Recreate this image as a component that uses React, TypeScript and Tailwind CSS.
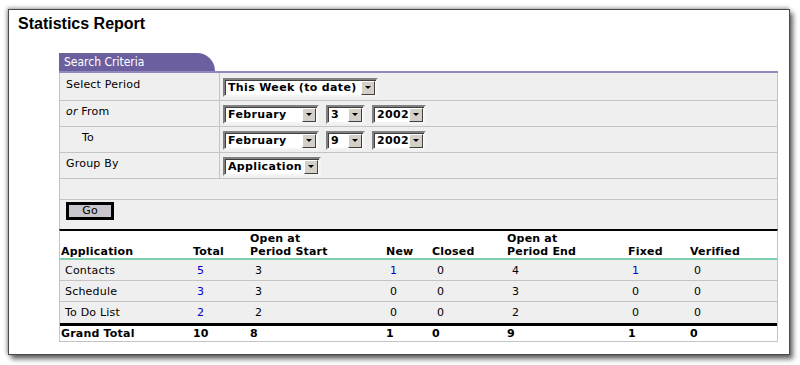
import React from "react";

function Select({ value, w }: { value: string; w: string }) {
  return (
    <div
      className={`${w} h-[19px] flex items-center bg-white border-2 border-t-[#808080] border-l-[#808080] border-r-[#f4f4f4] border-b-[#f4f4f4] shadow-[inset_1px_1px_0_#404040] pl-[3px] pr-[1px]`}
    >
      <span className="flex-1 font-bold text-[11px] leading-[13px] tracking-[0.35px] text-black whitespace-nowrap overflow-hidden">
        {value}
      </span>
      <span className="w-[14px] h-[14px] bg-[#d4d0c8] border border-t-white border-l-white border-r-[#404040] border-b-[#404040] flex items-center justify-center">
        <span className="w-0 h-0 border-l-[3px] border-r-[3px] border-t-[3px] border-l-transparent border-r-transparent border-t-black" />
      </span>
    </div>
  );
}

const rows = [
  { app: "Contacts", total: "5", start: "3", nw: "1", closed: "0", end: "4", fixed: "1", verified: "0" },
  { app: "Schedule", total: "3", start: "3", nw: "0", closed: "0", end: "3", fixed: "0", verified: "0" },
  { app: "To Do List", total: "2", start: "2", nw: "0", closed: "0", end: "2", fixed: "0", verified: "0" },
];

const cols = "grid grid-cols-[133px_57px_136px_46px_75px_121px_62px_87px]";

export default function App() {
  return (
    <div className="w-[800px] h-[365px] bg-white pt-[9px] pl-[8px] font-['DejaVu_Sans',Verdana,sans-serif] text-[11px] leading-[13px] text-black">
      <div className="w-[782px] h-[346px] bg-white border border-[#4a4a4a] shadow-[3px_4px_5px_rgba(0,0,0,0.6),-1px_-1px_4px_rgba(0,0,0,0.4)]">
        <h1 className="mt-[6px] pl-[9px] font-['Liberation_Sans',Arial,sans-serif] font-bold text-[16px] leading-[16px]">
          Statistics Report
        </h1>

        <div className="ml-[50px] mt-[21px] w-[719px]">
          {/* tab */}
          <div className="w-[156px] h-[18px] bg-[#6b5f9f] rounded-tr-[18px] pl-[5px] pt-[3px] font-['DejaVu_Sans_Condensed','DejaVu_Sans',Tahoma,sans-serif] text-[12px] leading-[13px] text-white">
            Search Criteria
          </div>
          <div className="h-[2px] bg-[#9089bd]" />

          {/* criteria */}
          <div className="bg-[#efefef] border-x border-[#c4c4c4] tracking-[0.2px]">
            <div className="flex h-[28px] border-b border-[#c4c4c4]">
              <div className="w-[160px] border-r border-[#c4c4c4] pl-[6px] pt-[5px]">Select Period</div>
              <div className="pl-[3px] pt-[5px]">
                <Select value="This Week (to date)" w="w-[155px]" />
              </div>
            </div>
            <div className="flex h-[26px] border-b border-[#c4c4c4]">
              <div className="w-[160px] border-r border-[#c4c4c4] pl-[6px] pt-[4px]">
                <i>or</i> From
              </div>
              <div className="flex gap-[7px] pl-[3px] pt-[4px]">
                <Select value="February" w="w-[96px]" />
                <Select value="3" w="w-[39px]" />
                <Select value="2002" w="w-[54px]" />
              </div>
            </div>
            <div className="flex h-[26px] border-b border-[#c4c4c4]">
              <div className="w-[160px] border-r border-[#c4c4c4] pl-[22px] pt-[4px]">To</div>
              <div className="flex gap-[7px] pl-[3px] pt-[4px]">
                <Select value="February" w="w-[96px]" />
                <Select value="9" w="w-[39px]" />
                <Select value="2002" w="w-[54px]" />
              </div>
            </div>
            <div className="flex h-[26px] border-b border-[#c4c4c4]">
              <div className="w-[160px] border-r border-[#c4c4c4] pl-[6px] pt-[4px]">Group By</div>
              <div className="pl-[3px] pt-[4px]">
                <Select value="Application" w="w-[98px]" />
              </div>
            </div>
            <div className="h-[21px] border-b border-[#c4c4c4]" />
            <div className="h-[29px] pl-[6px] pt-[2px]">
              <button className="w-[48px] h-[18px] border-[3px] border-black bg-[#c8c6cc] text-[11px] leading-[12px] text-black">
                Go
              </button>
            </div>
          </div>

          {/* results */}
          <div className="border-t-2 border-black border-x border-x-[#c4c4c4] border-b border-b-[#c4c4c4] tracking-[0.2px]">
            <div className={`${cols} h-[29px] items-end border-b-2 border-[#7fcfae] font-bold`}>
              <div className="pl-[1px]">Application</div>
              <div>Total</div>
              <div>
                Open at
                <br />
                Period Start
              </div>
              <div>New</div>
              <div>Closed</div>
              <div>
                Open at
                <br />
                Period End
              </div>
              <div>Fixed</div>
              <div>Verified</div>
            </div>
            {rows.map((r, i) => (
              <div
                key={r.app}
                className={`${cols} h-[21px] items-center bg-[#efefef] ${i < rows.length - 1 ? "border-b border-[#c4c4c4]" : ""}`}
              >
                <div className="pl-[5px]">{r.app}</div>
                <div className="pl-[4px] text-[#0000cc]">{r.total}</div>
                <div className="pl-[5px]">{r.start}</div>
                <div className={`pl-[4px] ${r.nw !== "0" ? "text-[#0000cc]" : ""}`}>{r.nw}</div>
                <div className="pl-[5px]">{r.closed}</div>
                <div className="pl-[5px]">{r.end}</div>
                <div className={`pl-[4px] ${r.fixed !== "0" ? "text-[#0000cc]" : ""}`}>{r.fixed}</div>
                <div className="pl-[4px]">{r.verified}</div>
              </div>
            ))}
            <div className={`${cols} h-[18px] items-center border-t-[3px] border-black font-bold`}>
              <div className="pl-[1px]">Grand Total</div>
              <div>10</div>
              <div>8</div>
              <div>1</div>
              <div>0</div>
              <div>9</div>
              <div>1</div>
              <div>0</div>
            </div>
          </div>
        </div>
      </div>
    </div>
  );
}
